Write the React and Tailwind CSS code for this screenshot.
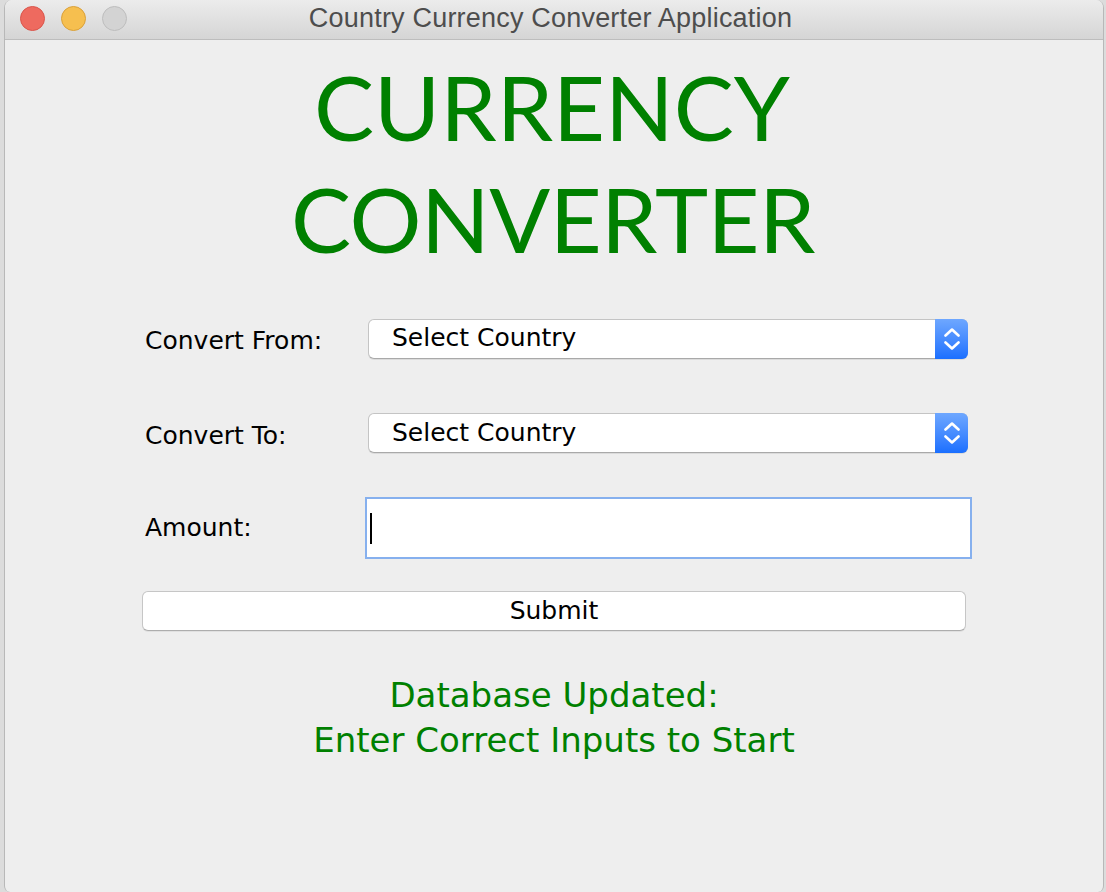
import React from "react";

const LUCIDA = { fontFamily: '"DejaVu Sans", "Liberation Sans", sans-serif' };

function Stepper() {
  return (
    <div className="flex h-full w-[33px] flex-col items-center justify-center gap-[4px] rounded-r-[6px] bg-gradient-to-b from-[#6ea7ff] to-[#1a6fff]">
      <svg width="16" height="9" viewBox="0 0 16 9" fill="none">
        <path d="M1.5 7.5 L8 1.5 L14.5 7.5" stroke="white" strokeWidth="2.6" strokeLinecap="round" strokeLinejoin="round" />
      </svg>
      <svg width="16" height="9" viewBox="0 0 16 9" fill="none">
        <path d="M1.5 1.5 L8 7.5 L14.5 1.5" stroke="white" strokeWidth="2.6" strokeLinecap="round" strokeLinejoin="round" />
      </svg>
    </div>
  );
}

function Select() {
  return (
    <div className="flex h-[40px] w-[600px] items-stretch rounded-[6px] border border-[#c4c4c4] border-b-[#a9a9a9] bg-white shadow-[0_1px_0_rgba(0,0,0,0.08)]">
      <div className="flex flex-1 items-center pl-[23px] text-[25px] text-black" style={LUCIDA}>
        <span className="-mt-[2px]">Select Country</span>
      </div>
      <div className="-my-px -mr-px">
        <Stepper />
      </div>
    </div>
  );
}

export default function App() {
  return (
    <div className="h-[892px] w-[1106px] overflow-hidden bg-[#dcdcdc]">
      <div className="ml-[4px] flex h-[892px] w-[1100px] flex-col overflow-hidden rounded-t-[8px] rounded-b-[6px] border-x border-[#b8b8b8] bg-[#eeeeee]">
        {/* Title bar */}
        <div className="relative flex h-[40px] shrink-0 items-center justify-center border-b border-[#bdbdbd] bg-gradient-to-b from-[#ececec] to-[#d5d5d5]">
          <div className="absolute left-[15px] top-[6px] flex gap-[16px]">
            <div className="h-[25px] w-[25px] rounded-full border border-[#d9554b] bg-[#ee6a5f]" />
            <div className="h-[25px] w-[25px] rounded-full border border-[#d9a03a] bg-[#f6bf4f]" />
            <div className="h-[25px] w-[25px] rounded-full border border-[#bdbdbd] bg-[#d3d3d3]" />
          </div>
          <span className="-mt-[2px] ml-[-7px] text-[27px] tracking-[0.2px] text-[#4d4d4d]" style={{ fontFamily: '"Liberation Sans", Arial, sans-serif' }}>
            Country Currency Converter Application
          </span>
        </div>

        {/* Content */}
        <div className="flex flex-col">
          <div
            className="mt-[10px] flex flex-col items-center text-[90px] leading-[112px] text-[#008000]"
            style={{ fontFamily: 'Lato, "Noto Sans", sans-serif' }}
          >
            <span className="-ml-[4px]">CURRENCY</span>
            <span className="-ml-[2px] tracking-[-0.5px]">CONVERTER</span>
          </div>

          <div className="mt-[44px] flex items-center">
            <div className="ml-[140px] w-[223px] pt-[4px] text-[25px] text-black" style={LUCIDA}>Convert From:</div>
            <Select />
          </div>

          <div className="mt-[53px] flex items-center">
            <div className="ml-[140px] w-[223px] pt-[4px] text-[25px] text-black" style={LUCIDA}>Convert To:</div>
            <Select />
          </div>

          <div className="mt-[43px] flex items-center">
            <div className="ml-[140px] w-[220px] text-[25px] text-black" style={LUCIDA}>Amount:</div>
            <div className="flex h-[62px] w-[607px] items-center border-2 border-[#86b0ee] bg-white pl-[3px]">
              <div className="h-[31px] w-[2px] bg-black" />
            </div>
          </div>

          <div className="ml-[137px] mt-[32px] flex h-[40px] w-[824px] items-center justify-center rounded-[6px] border border-[#c6c6c6] border-b-[#adadad] bg-white shadow-[0_1px_0_rgba(0,0,0,0.06)]">
            <span className="-mt-[1px] text-[25px] text-black" style={LUCIDA}>Submit</span>
          </div>

          <div className="mt-[42px] flex flex-col items-center text-[34px] leading-[45px] text-[#008000]" style={LUCIDA}>
            <span>Database Updated:</span>
            <span>Enter Correct Inputs to Start</span>
          </div>
        </div>
      </div>
    </div>
  );
}
